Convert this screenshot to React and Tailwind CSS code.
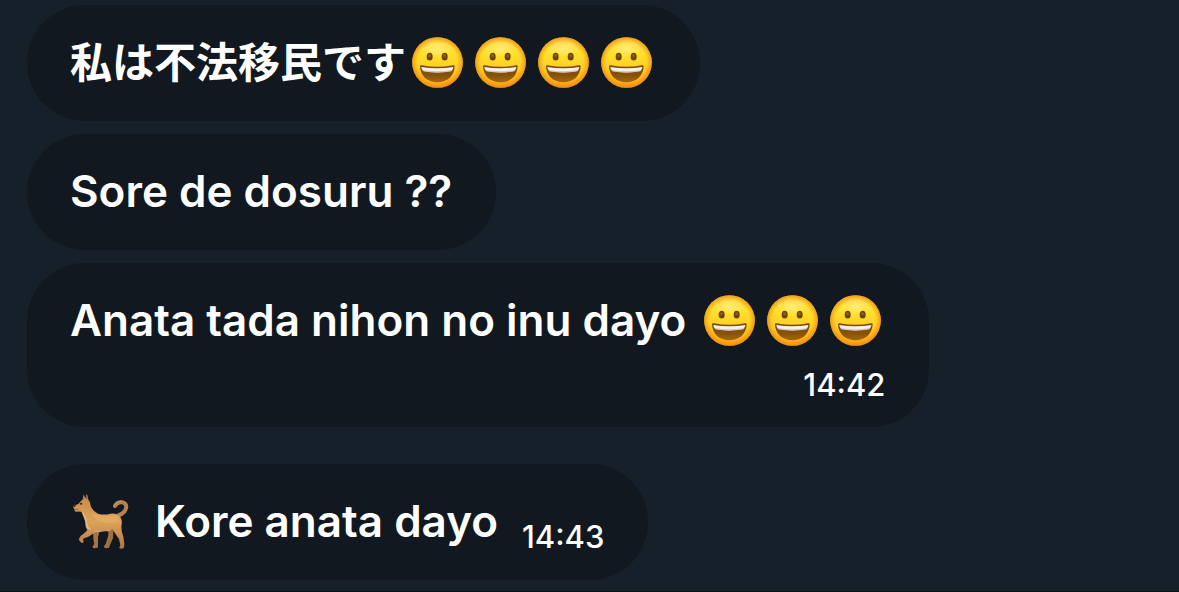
import React from 'react';

const messages = [
    { id: 1, text: '私は不法移民です', faces: 4, lang: 'ja' },
    { id: 2, text: 'Sore de dosuru ??' },
    { id: 3, text: 'Anata tada nihon no inu dayo', faces: 3, time: '14:42', stacked: true },
    { id: 4, text: 'Kore anata dayo', dog: true, time: '14:43', newGroup: true },
];

// Gradients shared by every emoji on the page
const EmojiDefs = () => (
    <svg className="absolute w-0 h-0" aria-hidden="true">
        <defs>
            <linearGradient id="faceFill" x1="0" y1="0" x2="0" y2="1">
                <stop offset="0" stopColor="#ffd23c" />
                <stop offset="0.3" stopColor="#ffe22e" />
                <stop offset="0.6" stopColor="#ffd024" />
                <stop offset="1" stopColor="#fea518" />
            </linearGradient>
            <radialGradient id="faceRim" cx="0.5" cy="0.5" r="0.5">
                <stop offset="0.78" stopColor="#f0860c" stopOpacity="0" />
                <stop offset="1" stopColor="#ea7d08" stopOpacity="0.65" />
            </radialGradient>
            <radialGradient id="faceShine" cx="0.5" cy="0.5" r="0.5">
                <stop offset="0" stopColor="#fff6a8" stopOpacity="0.6" />
                <stop offset="1" stopColor="#fff6a8" stopOpacity="0" />
            </radialGradient>
            <linearGradient id="mouthFill" x1="0" y1="0" x2="0" y2="1">
                <stop offset="0" stopColor="#7a4808" />
                <stop offset="0.6" stopColor="#87520a" />
                <stop offset="1" stopColor="#a8690c" />
            </linearGradient>
            <linearGradient id="dogFill" x1="0" y1="0" x2="0" y2="1">
                <stop offset="0" stopColor="#c98d4a" />
                <stop offset="0.45" stopColor="#dba45c" />
                <stop offset="0.7" stopColor="#cb8f50" />
                <stop offset="1" stopColor="#ad7448" />
            </linearGradient>
        </defs>
    </svg>
);

const Face = () => (
    <svg className="w-[51px] h-[51px] shrink-0" viewBox="0 0 153 153" role="img" aria-label="grinning face">
        <circle cx="76.5" cy="76.5" r="76" fill="url(#faceFill)" />
        <ellipse cx="76" cy="34" rx="52" ry="28" fill="url(#faceShine)" />
        <circle cx="76.5" cy="76.5" r="76" fill="url(#faceRim)" />
        <ellipse cx="53" cy="59" rx="9" ry="11.5" fill="#6e430a" />
        <ellipse cx="98" cy="59" rx="9" ry="11.5" fill="#6e430a" />
        <ellipse cx="53" cy="56" rx="4" ry="4" fill="#94631a" />
        <ellipse cx="98" cy="56" rx="4" ry="4" fill="#94631a" />
        <path d="M24 88Q24 84 29 85Q76 94 123 85Q128 84 128 88C127 117 106 136 76 136S25 117 24 88Z" fill="url(#mouthFill)" />
        <path d="M28 90Q76 98 124 90Q124 97 118 102Q76 110 34 102Q28 97 28 90Z" fill="#f4f1ef" />
        <path d="M31 99Q76 107 121 99L118 103Q76 111 34 103Z" fill="#cfc6bf" />
    </svg>
);

const Dog = () => (
    <svg className="w-[63px] h-[63px] shrink-0" viewBox="30 30 189 189" role="img" aria-label="dog">
        {/* far legs */}
        <path d="M99 148L100 176L103 192L98 199Q97 205 103 205L111 204Q115 202 114 194L114 172L120 150Z" fill="#a87346" />
        <path d="M140 142Q149 158 143 172L138 190L132 199Q131 205 138 205L146 204Q149 202 150 194L159 174L160 150Z" fill="#a46e42" />
        {/* tail */}
        <path d="M177 105Q186 103 193 95C205 78 196 66 182 67Q169 68 165 78" fill="none" stroke="#b98152" strokeWidth="12" strokeLinecap="round" />
        <path d="M164 75Q170 64 184 63" fill="none" stroke="#d19c68" strokeWidth="3" strokeLinecap="round" />
        {/* ears */}
        <path d="M68 59L70 43L77 54L79 41Q86 49 84 62Z" fill="#a87658" />
        <path d="M78 57L80 46L82 56Z" fill="#694a48" />
        {/* head, body and near legs */}
        <path d="M67 59Q75 53 84 58Q91 65 92 77Q97 93 114 101Q133 106 151 101Q172 98 181 111Q188 123 184 139L185 153Q192 172 193 192L192 203Q184 209 178 204Q179 200 181 195L177 177L162 155L156 147Q137 154 114 153L99 161L84 171L72 175Q67 178 71 185Q70 190 65 189Q56 184 57 176Q61 165 71 161L82 151Q75 141 76 126Q71 110 64 95Q57 94 48 95Q42 94 44 88Q38 85 41 77L55 72Q60 65 67 59Z" fill="url(#dogFill)" />
        <path d="M65 94Q79 104 81 125Q82 141 95 149Q84 151 78 138Q78 118 65 94Z" fill="#e7b882" />
        <path d="M104 151Q132 154 156 146Q151 155 134 154Q118 158 102 155Z" fill="#d7a681" />
        <path d="M116 105Q148 110 170 104Q179 113 173 125Q148 133 118 123Q98 117 94 97Q103 105 116 105Z" fill="#e8b568" opacity="0.5" />
        <path d="M39 78Q40 73 46 74L48 78L43 82Z" fill="#413336" />
        <path d="M44 89Q50 91 55 87" fill="none" stroke="#755039" strokeWidth="2" />
        <ellipse cx="63" cy="71" rx="4" ry="3" fill="#3d2b29" />
    </svg>
);

const Message = ({ message }) => {
    const { text, faces = 0, dog, time, stacked, lang, newGroup } = message;

    return (
        <li
            className={`w-fit max-w-full min-h-[116px] rounded-[58px] bg-[#11181f] pl-[43px] pr-11 ${
                newGroup ? 'mt-6' : ''
            } ${stacked ? 'pb-6' : ''}`}
        >
            <div className="flex items-center min-h-[116px] pb-0.5">
                {dog && <Dog />}
                <p
                    lang={lang}
                    className={`whitespace-nowrap ${
                        lang === 'ja'
                            ? "font-['Noto_Sans_CJK_JP',sans-serif] text-[42px] leading-[60px] font-bold pb-1"
                            : 'text-[44px] font-semibold'
                    } ${dog ? 'ml-[22px]' : ''}`}
                >
                    {text}
                </p>
                {faces > 0 && (
                    <div className={`flex gap-3 pl-1.5 pr-1 ${stacked ? 'ml-3' : ''}`}>
                        {Array.from({ length: faces }, (_, i) => <Face key={i} />)}
                    </div>
                )}
                {time && !stacked && (
                    <time className="ml-6 mt-8 text-[31px] leading-8 font-medium">{time}</time>
                )}
            </div>
            {stacked && (
                <time className="-mt-3 block text-right text-[31px] leading-9 font-medium">{time}</time>
            )}
        </li>
    );
};

export default function App() {
    return (
        <main className="relative min-h-screen bg-[#16202a] border-b border-[#0b1016] text-white font-['Inter',sans-serif]">
            <EmojiDefs />
            <ul className="flex flex-col items-start gap-[13px] px-[27px] pt-[5px] pb-[11px]">
                {messages.map((m) => <Message key={m.id} message={m} />)}
            </ul>
        </main>
    );
}
